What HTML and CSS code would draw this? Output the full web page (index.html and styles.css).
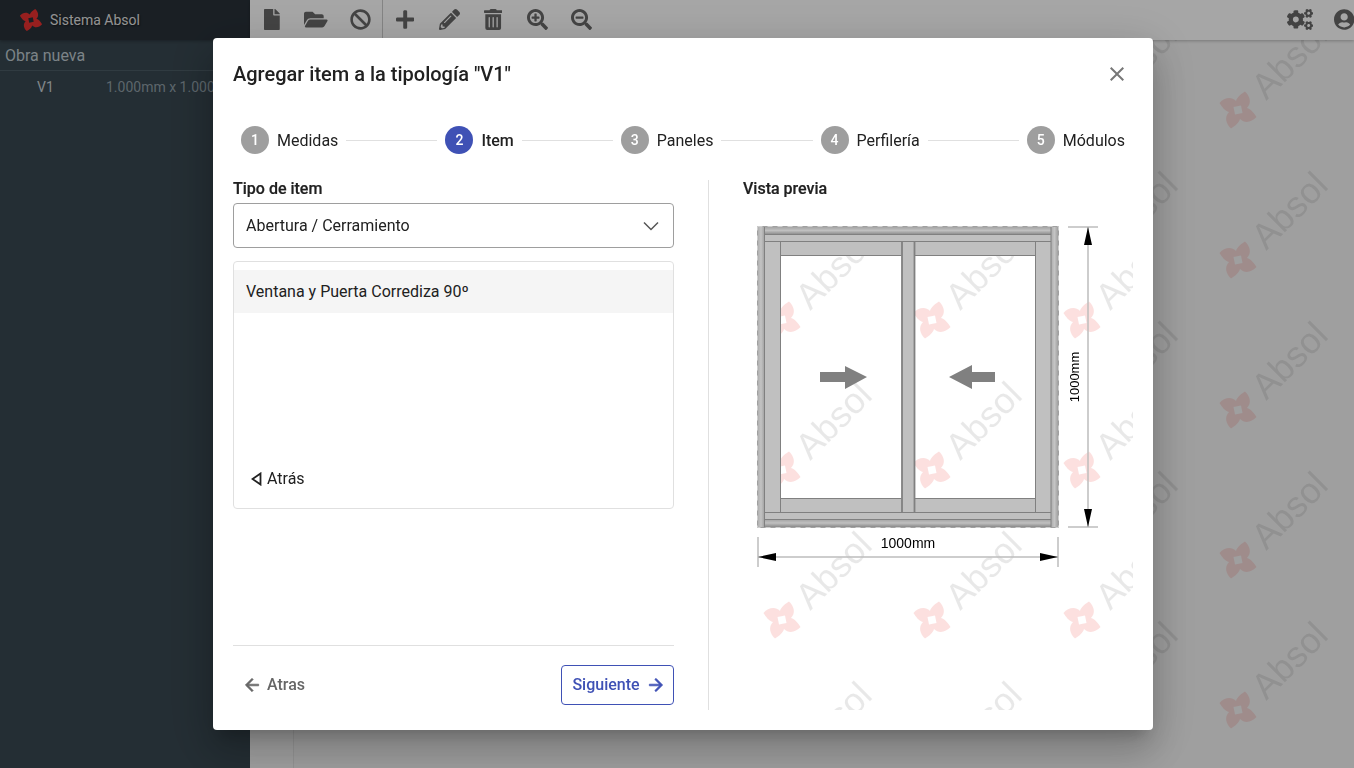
FILE: index.html
```html
<!DOCTYPE html>
<html lang="es">
<head>
<meta charset="utf-8">
<title>Sistema Absol</title>
<link rel="stylesheet" href="styles.css">
</head>
<body>
<svg class="defs" width="0" height="0" aria-hidden="true">
  <defs>
    <path id="pin" fill-rule="evenodd" d="M7-18.500C12-14 14-7 9-2C13-1 16 3 18.500 7C14 12 7 14 2 9C1 13-3 16-7 18.500C-12 14-14 7-9 2C-13 1-16-3-18.500-7C-14-12-7-14-2-9C-1-13 3-16 7-18.500ZM-4.500-3L-3 4.500 4.500 3 3-4.500Z"/>
    <pattern id="wm" width="150" height="150" patternUnits="userSpaceOnUse">
      <use href="#pin" x="39" y="116" class="wm-logo"/>
      <text x="90" y="66" class="wm-text" transform="rotate(-45 90 66)" dy="13" text-anchor="middle">Absol</text>
    </pattern>
    <pattern id="wm-main" href="#wm" x="5" y="-46"/>
    <pattern id="wm-prev" href="#wm" x="0" y="0"/>
    <linearGradient id="band" x1="0" y1="0" x2="0" y2="1">
      <stop offset="0" stop-color="#a0a0a0"/><stop offset=".5" stop-color="#c0c0c0"/><stop offset="1" stop-color="#8a8a8a"/>
    </linearGradient>
    <linearGradient id="bandv" x1="0" y1="0" x2="1" y2="0">
      <stop offset="0" stop-color="#acacac"/><stop offset=".5" stop-color="#c4c4c4"/><stop offset="1" stop-color="#a0a0a0"/>
    </linearGradient>
  </defs>
</svg>

<div class="app">
  <aside class="sidebar">
    <div class="brand">
      <svg class="brand-logo" viewBox="-20 -20 40 40"><use href="#pin"/></svg>
      <span class="brand-name">Sistema Absol</span>
    </div>
    <div class="work-title">Obra nueva</div>
    <div class="work-row"><span class="work-name">V1</span><span class="work-size">1.000mm x 1.000mm</span></div>
  </aside>
  <div class="content">
    <header class="toolbar">
      <div class="tool-group sep">
        <span class="tool"><svg viewBox="0 0 384 512"><path d="M224 136V0H24C10.7 0 0 10.7 0 24v464c0 13.3 10.700 24 24 24h336c13.300 0 24-10.700 24-24V160H248c-13.200 0-24-10.800-24-24zm160-14.100v6.100H256V0h6.100c6.400 0 12.500 2.500 17 7l97.900 98c4.500 4.500 7 10.600 7 16.900z"/></svg></span>
        <span class="tool"><svg viewBox="0 0 576 512"><path d="M572.694 292.093L500.270 416.248A63.997 63.997 0 0 1 444.989 448H45.025c-18.523 0-30.064-20.093-20.731-36.093l72.424-124.155A64 64 0 0 1 152 256h399.964c18.523 0 30.064 20.093 20.730 36.093zM152 224h328v-48c0-26.510-21.490-48-48-48H272l-64-64H48C21.490 64 0 85.490 0 112v278.046l69.077-118.418C86.214 242.250 117.989 224 152 224z"/></svg></span>
        <span class="tool"><svg viewBox="0 0 512 512"><path d="M256 8C119.034 8 8 119.033 8 256s111.034 248 248 248 248-111.034 248-248S392.967 8 256 8zm130.108 117.892c65.448 65.448 70 165.481 20.677 235.637L150.470 105.216c70.204-49.356 170.226-44.735 235.638 20.676zM125.892 386.108c-65.448-65.448-70-165.481-20.677-235.637L361.530 406.784c-70.203 49.356-170.226 44.736-235.638-20.676z"/></svg></span>
      </div>
      <div class="tool-group">
        <span class="tool"><svg viewBox="0 0 448 512"><path d="M416 208H272V64c0-17.670-14.330-32-32-32h-32c-17.670 0-32 14.330-32 32v144H32c-17.670 0-32 14.330-32 32v32c0 17.670 14.330 32 32 32h144v144c0 17.670 14.330 32 32 32h32c17.670 0 32-14.330 32-32V304h144c17.670 0 32-14.330 32-32v-32c0-17.670-14.330-32-32-32z"/></svg></span>
        <span class="tool"><svg viewBox="0 0 512 512"><path d="M497.900 142.100l-46.100 46.100c-4.700 4.700-12.300 4.700-17 0l-111-111c-4.700-4.700-4.700-12.300 0-17l46.100-46.100c18.700-18.700 49.100-18.700 67.900 0l60.100 60.100c18.800 18.700 18.800 49.100 0 67.900zM284.200 99.800L21.600 362.400.4 483.900c-2.900 16.400 11.400 30.600 27.800 27.800l121.500-21.300 262.600-262.600c4.700-4.700 4.700-12.300 0-17l-111-111c-4.800-4.700-12.400-4.700-17.100 0zM124.100 339.900c-5.500-5.500-5.500-14.300 0-19.800l154-154c5.500-5.500 14.300-5.500 19.800 0s5.500 14.300 0 19.800l-154 154c-5.500 5.500-14.300 5.500-19.800 0zM88 424h48v36.300l-64.500 11.300-31.100-31.100L51.700 376H88v48z"/></svg></span>
        <span class="tool"><svg viewBox="0 0 448 512"><path d="M32 464a48 48 0 0 0 48 48h288a48 48 0 0 0 48-48V128H32zm272-256a16 16 0 0 1 32 0v224a16 16 0 0 1-32 0zm-96 0a16 16 0 0 1 32 0v224a16 16 0 0 1-32 0zm-96 0a16 16 0 0 1 32 0v224a16 16 0 0 1-32 0zM432 32H312l-9.400-18.700A24 24 0 0 0 281.100 0H166.800a23.720 23.720 0 0 0-21.400 13.300L136 32H16A16 16 0 0 0 0 48v32a16 16 0 0 0 16 16h416a16 16 0 0 0 16-16V48a16 16 0 0 0-16-16z"/></svg></span>
        <span class="tool"><svg viewBox="0 0 512 512"><path d="M304 192v32c0 6.600-5.400 12-12 12h-56v56c0 6.600-5.400 12-12 12h-32c-6.600 0-12-5.400-12-12v-56h-56c-6.600 0-12-5.400-12-12v-32c0-6.600 5.400-12 12-12h56v-56c0-6.600 5.400-12 12-12h32c6.600 0 12 5.400 12 12v56h56c6.600 0 12 5.400 12 12zm201 284.700L476.700 505c-9.400 9.400-24.600 9.400-33.900 0L343 405.300c-4.500-4.500-7-10.600-7-17V372c-35.300 27.600-79.700 44-128 44C93.100 416 0 322.900 0 208S93.100 0 208 0s208 93.100 208 208c0 48.300-16.400 92.700-44 128h16.300c6.400 0 12.500 2.500 17 7l99.700 99.700c9.300 9.400 9.300 24.600 0 34zM344 208c0-75.200-60.800-136-136-136S72 132.800 72 208s60.800 136 136 136 136-60.800 136-136z"/></svg></span>
        <span class="tool"><svg viewBox="0 0 512 512"><path d="M304 192v32c0 6.600-5.400 12-12 12H124c-6.600 0-12-5.400-12-12v-32c0-6.600 5.400-12 12-12h168c6.600 0 12 5.400 12 12zm201 284.700L476.700 505c-9.400 9.400-24.600 9.400-33.900 0L343 405.300c-4.500-4.500-7-10.600-7-17V372c-35.300 27.600-79.700 44-128 44C93.100 416 0 322.900 0 208S93.100 0 208 0s208 93.100 208 208c0 48.300-16.400 92.700-44 128h16.300c6.400 0 12.500 2.500 17 7l99.700 99.700c9.300 9.400 9.300 24.600 0 34zM344 208c0-75.200-60.800-136-136-136S72 132.800 72 208s60.800 136 136 136 136-60.800 136-136z"/></svg></span>
      </div>
      <div class="tool-group end">
        <span class="tool"><svg viewBox="0 0 640 512"><path d="M512.100 191l-8.200 14.300c-3 5.300-9.400 7.500-15.100 5.400-11.800-4.400-22.600-10.700-32.100-18.600-4.600-3.800-5.800-10.500-2.800-15.700l8.200-14.300c-6.900-8-12.300-17.300-15.900-27.400h-16.500c-6 0-11.200-4.300-12.200-10.300-2-12-2.100-24.600 0-37.100 1-6 6.200-10.400 12.200-10.400h16.500c3.600-10.100 9-19.400 15.900-27.400l-8.200-14.300c-3-5.200-1.900-11.900 2.800-15.700 9.500-7.900 20.400-14.200 32.100-18.600 5.700-2.100 12.100.1 15.100 5.400l8.200 14.300c10.500-1.900 21.200-1.900 31.700 0L552 6.300c3-5.300 9.400-7.500 15.100-5.400 11.800 4.400 22.600 10.700 32.100 18.600 4.600 3.800 5.800 10.500 2.800 15.700l-8.200 14.300c6.900 8 12.300 17.300 15.900 27.400h16.500c6 0 11.200 4.300 12.200 10.300 2 12 2.100 24.600 0 37.100-1 6-6.200 10.400-12.200 10.400h-16.500c-3.600 10.100-9 19.400-15.900 27.400l8.200 14.300c3 5.200 1.900 11.900-2.800 15.700-9.500 7.900-20.400 14.200-32.100 18.600-5.700 2.100-12.100-.1-15.100-5.400l-8.200-14.300c-10.400 1.900-21.200 1.900-31.700 0zm-10.500-58.800c38.500 29.600 82.400-14.300 52.800-52.800-38.500-29.700-82.400 14.300-52.800 52.800zM386.300 286.100l33.700 16.800c10.100 5.800 14.500 18.100 10.500 29.100-8.900 24.200-26.400 46.400-42.600 65.800-7.400 8.900-20.200 11.100-30.300 5.300l-29.100-16.800c-16 13.700-34.600 24.600-54.900 31.700v33.600c0 11.600-8.300 21.600-19.700 23.600-24.600 4.200-50.400 4.400-75.900 0-11.500-2-20-11.900-20-23.600V418c-20.300-7.200-38.900-18-54.900-31.700L74 403c-10 5.800-22.900 3.600-30.300-5.300-16.200-19.400-33.300-41.600-42.200-65.700-4-10.900.4-23.200 10.500-29.100l33.300-16.800c-3.900-20.900-3.900-42.400 0-63.400L12 205.800c-10.100-5.800-14.600-18.100-10.500-29 8.900-24.200 26-46.400 42.200-65.800 7.400-8.900 20.200-11.100 30.300-5.300l29.100 16.800c16-13.700 34.600-24.600 54.900-31.700V57.100c0-11.500 8.200-21.500 19.600-23.500 24.600-4.200 50.500-4.400 76-.1 11.500 2 20 11.900 20 23.600v33.600c20.300 7.200 38.900 18 54.900 31.700l29.100-16.800c10-5.800 22.900-3.600 30.300 5.300 16.200 19.400 33.200 41.600 42.100 65.800 4 10.900.1 23.200-10 29.100l-33.700 16.800c3.900 21 3.900 42.500 0 63.500zm-117.600 21.100c59.200-77-28.700-164.900-105.700-105.700-59.200 77 28.700 164.900 105.700 105.700zm243.400 182.700l-8.200 14.300c-3 5.300-9.400 7.500-15.100 5.400-11.800-4.400-22.600-10.700-32.100-18.600-4.600-3.800-5.800-10.500-2.800-15.700l8.200-14.300c-6.900-8-12.300-17.300-15.900-27.400h-16.500c-6 0-11.200-4.300-12.200-10.300-2-12-2.100-24.600 0-37.100 1-6 6.200-10.400 12.200-10.400h16.500c3.600-10.100 9-19.400 15.900-27.400l-8.200-14.300c-3-5.200-1.900-11.900 2.800-15.700 9.500-7.900 20.400-14.200 32.100-18.600 5.700-2.100 12.100.1 15.100 5.400l8.200 14.300c10.500-1.900 21.200-1.900 31.700 0l8.200-14.300c3-5.300 9.400-7.500 15.100-5.400 11.800 4.400 22.600 10.700 32.100 18.600 4.600 3.800 5.800 10.500 2.800 15.700l-8.200 14.300c6.900 8 12.300 17.300 15.900 27.400h16.500c6 0 11.200 4.300 12.200 10.300 2 12 2.100 24.600 0 37.100-1 6-6.200 10.400-12.200 10.400h-16.500c-3.600 10.100-9 19.400-15.900 27.400l8.200 14.300c3 5.200 1.900 11.900-2.800 15.700-9.500 7.900-20.400 14.200-32.100 18.600-5.700 2.100-12.100-.1-15.100-5.400l-8.200-14.300c-10.400 1.900-21.200 1.900-31.700 0zM501.600 431c38.500 29.600 82.400-14.300 52.800-52.800-38.500-29.600-82.400 14.300-52.800 52.800z"/></svg></span>
        <span class="tool"><svg viewBox="0 0 496 512"><path d="M248 8C111 8 0 119 0 256s111 248 248 248 248-111 248-248S385 8 248 8zm0 96c48.600 0 88 39.400 88 88s-39.400 88-88 88-88-39.400-88-88 39.400-88 88-88zm0 344c-58.700 0-111.300-26.600-146.500-68.200 18.800-35.400 55.600-59.800 98.500-59.800 2.400 0 4.800.4 7.100 1.100 13 4.200 26.600 6.900 40.900 6.900 14.300 0 28-2.700 40.900-6.900 2.300-.7 4.700-1.100 7.100-1.100 42.900 0 79.700 24.400 98.500 59.800C359.300 421.400 306.700 448 248 448z"/></svg></span>
      </div>
    </header>
    <div class="workspace">
      <div class="strip"></div>
      <main class="canvas">
        <svg class="wm-fill" width="100%" height="100%"><rect width="100%" height="100%" fill="url(#wm-main)"/></svg>
      </main>
    </div>
  </div>
</div>

<div class="backdrop"></div>

<section class="modal">
  <div class="modal-head">
    <h2 class="modal-title">Agregar item a la tipología "V1"</h2>
    <svg class="close" viewBox="0 0 24 24"><path d="M19 6.410L17.590 5 12 10.590 6.410 5 5 6.410 10.590 12 5 17.590 6.410 19 12 13.410 17.590 19 19 17.590 13.410 12z"/></svg>
  </div>
  <ol class="stepper">
    <li class="step"><span class="dot">1</span><span class="step-label">Medidas</span></li>
    <li class="line"></li>
    <li class="step active"><span class="dot">2</span><span class="step-label">Item</span></li>
    <li class="line"></li>
    <li class="step"><span class="dot">3</span><span class="step-label">Paneles</span></li>
    <li class="line"></li>
    <li class="step"><span class="dot">4</span><span class="step-label">Perfilería</span></li>
    <li class="line"></li>
    <li class="step"><span class="dot">5</span><span class="step-label">Módulos</span></li>
  </ol>
  <div class="modal-body">
    <div class="col-left">
      <div class="field-label">Tipo de item</div>
      <div class="select">
        <span>Abertura / Cerramiento</span>
        <svg class="chev" viewBox="0 0 16 10"><path d="M1 1.500l7 7 7-7"/></svg>
      </div>
      <div class="list">
        <div class="list-item">Ventana y Puerta Corrediza 90º</div>
        <div class="list-back">
          <svg class="tri" viewBox="0 0 11 14"><path d="M9.500 1.500L1.500 7l8 5.500z"/></svg>
          <span>Atrás</span>
        </div>
      </div>
      <div class="footer">
        <div class="btn-back">
          <svg viewBox="0 0 24 24"><path d="M20 11H7.830l5.590-5.590L12 4l-8 8 8 8 1.410-1.410L7.830 13H20v-2z"/></svg>
          <span>Atras</span>
        </div>
        <div class="btn-next">
          <span>Siguiente</span>
          <svg viewBox="0 0 24 24"><path d="M12 4l-1.410 1.410L16.170 11H4v2h12.170l-5.580 5.590L12 20l8-8z"/></svg>
        </div>
      </div>
    </div>
    <div class="col-right">
      <div class="field-label">Vista previa</div>
      <div class="preview">
        <svg class="wm-fill" width="100%" height="100%"><rect width="100%" height="100%" fill="url(#wm-prev)"/></svg>
        <svg class="drawing" width="390" height="506" viewBox="743 204 390 506">
          <g class="frame">
            <rect x="765" y="241.500" width="16" height="271" class="fill"/>
            <rect x="781" y="241.500" width="121" height="14.500" class="fill"/>
            <rect x="781" y="498" width="121" height="14.500" class="fill"/>
            <rect x="902" y="241.500" width="13" height="271" class="fill"/>
            <rect x="915" y="241.500" width="120" height="14.500" class="fill"/>
            <rect x="915" y="498" width="120" height="14.500" class="fill"/>
            <rect x="1035" y="241.500" width="16" height="271" class="fill"/>
            <path class="ln" d="M780.500 241.500V512.500M781 255.500H901.500M781 498.500H901.500M1035.500 241.500V512.500M915 255.500H1035M915 498.500H1035"/>
            <path class="ln-thick" d="M902 241.500V512.500M914.500 241.500V512.500"/>
            <rect x="758" y="234.500" width="300" height="7" class="fill"/>
            <rect x="758" y="512" width="300" height="7" class="fill"/>
            <rect x="765" y="226.500" width="286" height="8" fill="url(#band)"/>
            <rect x="765" y="519" width="286" height="8" fill="url(#band)"/>
            <rect x="757.500" y="226.500" width="7" height="301" fill="url(#bandv)"/>
            <rect x="1051" y="226.500" width="7" height="301" fill="url(#bandv)"/>
            <path class="ln" d="M764.500 226.500V527M1051 226.500V527M765 234.500H1051M765 241.500H1051M765 512.500H1051M765 519.500H1051"/>
            <path class="edge" d="M757.500 226.500H1058.500V527.500H757.500Z"/>
            <path class="dash" d="M757.500 226.500H1058.500V527.500H757.500Z"/>
          </g>
          <path class="slide" d="M820 372H845V366L867 377 845 389V382H820Z"/>
          <path class="slide" d="M995 372H972V365L949 377 972 389V382H995Z"/>
          <g class="dim">
            <path d="M1068 227H1098M1068 527H1098M1088 227V527M758 537V567M1058 537V567M758 557H1058"/>
          </g>
          <path class="head" d="M1088 227L1092 245H1084ZM1088 527L1092 509H1084ZM758 557L776 553V561ZM1058 557L1040 553V561Z"/>
          <text class="dim-text" x="908" y="548" text-anchor="middle">1000mm</text>
          <text class="dim-text dim-v" x="1079" y="377" text-anchor="middle" transform="rotate(-90 1079 377)">1000mm</text>
        </svg>
      </div>
    </div>
  </div>
</section>
</body>
</html>
```
FILE: styles.css
```css
* { box-sizing: border-box; }
html, body { margin: 0; height: 100%; overflow: hidden; }
body { font-family: Roboto, "Liberation Sans", sans-serif; font-size: 16px; color: #212121; background: #f2f2f2; }
.defs { position: absolute; }

.app { display: flex; width: 1354px; height: 768px; }
.sidebar { width: 250px; flex: none; background: #37464f; overflow: hidden; color: #c4cdd2; }
.brand { height: 40px; background: #283038; display: flex; align-items: center; padding-left: 19px; box-shadow: 0 1px 3px rgba(0,0,0,.3); }
.brand-logo { width: 24px; height: 24px; fill: #e53030; flex: none; }
.brand-name { margin-left: 7px; font-size: 14px; color: #e0e0e0; text-shadow: 1px 1px 2px rgba(0,0,0,.6); }
.work-title { height: 31px; line-height: 31px; padding-left: 5px; font-size: 16px; color: #bcc7cd; border-bottom: 1px solid #4a5a63; }
.work-row { display: flex; height: 32px; align-items: center; font-size: 14px; white-space: nowrap; }
.work-name { margin-left: 37px; width: 69px; flex: none; color: #c4cdd2; }
.work-size { color: #8d9ba3; }

.content { flex: 1; display: flex; flex-direction: column; min-width: 0; }
.toolbar { height: 40px; flex: none; display: flex; background: #fcfcfc; box-shadow: 0 1px 3px rgba(0,0,0,.25); position: relative; z-index: 1; overflow: hidden; }
.tool-group { display: flex; }
.tool-group.sep { border-right: 1px solid #c8c8c8; }
.tool-group.end { margin-left: auto; margin-right: -12px; }
.tool { width: 44px; height: 38px; display: flex; align-items: center; justify-content: center; }
.tool svg { height: 21px; fill: #676767; display: block; }
.workspace { flex: 1; display: flex; min-height: 0; }
.strip { width: 44px; flex: none; background: #f4f4f4; border-right: 1px solid #e2e2e2; }
.canvas { flex: 1; position: relative; background: #f2f2f2; overflow: hidden; }

.wm-fill { position: absolute; inset: 0; display: block; }
.wm-logo { fill: #ef5350; fill-opacity: .18; }
.wm-text { font-family: "Liberation Sans", Arial, sans-serif; font-size: 36px; fill: #000; fill-opacity: .09; }

.backdrop { position: fixed; inset: 0; z-index: 5; background: rgba(0,0,0,.34); }

.modal { position: fixed; z-index: 6; left: 213px; top: 38px; width: 940px; height: 692px; background: #fff; border-radius: 4px; padding: 24px 20px 20px;
  display: flex; flex-direction: column;
  box-shadow: 0 11px 15px -7px rgba(0,0,0,.2), 0 24px 38px 3px rgba(0,0,0,.14), 0 9px 46px 8px rgba(0,0,0,.12); }
.modal-head { height: 24px; display: flex; align-items: center; justify-content: space-between; }
.modal-title { margin: 0; font-size: 20px; font-weight: 500; line-height: 24px; color: #212121; }
.close { width: 24px; height: 24px; fill: #777; margin-right: 4px; }

.stepper { list-style: none; margin: 40px 0 0; padding: 0 8px; height: 28px; display: flex; align-items: center; }
.step { display: flex; align-items: center; gap: 8px; flex: none; }
.dot { width: 28px; height: 28px; border-radius: 50%; background: #9e9e9e; color: #fff; font-size: 14px; font-weight: 500; display: flex; align-items: center; justify-content: center; }
.step-label { color: #212121; }
.step.active .dot { background: #3f51b5; }
.step.active .step-label { font-weight: 500; }
.line { flex: 1; height: 1px; background: #e0e0e0; margin: 0 8px; }

.modal-body { margin-top: 26px; height: 530px; display: flex; }
.col-left { width: 441px; flex: none; display: flex; flex-direction: column; }
.col-right { flex: 1; margin-left: 34px; padding-left: 34px; border-left: 1px solid #e0e0e0; min-width: 0; }
.field-label { font-size: 16px; font-weight: 500; line-height: 18px; color: #212121; -webkit-text-stroke: .2px #212121; }
.select { margin-top: 5px; height: 45px; border: 1px solid #9e9e9e; border-radius: 4px; padding: 0 14px 0 12px; display: flex; align-items: center; justify-content: space-between; }
.chev { width: 16px; height: 10px; fill: none; stroke: #555; stroke-width: 1.5; }
.list { margin-top: 13px; height: 248px; border: 1px solid #e0e0e0; border-radius: 4px; padding-top: 8px; display: flex; flex-direction: column; }
.list-item { height: 43px; line-height: 43px; padding-left: 12px; background: #f5f5f5; }
.list-back { margin-top: auto; height: 39px; display: flex; align-items: flex-start; padding: 0 0 0 17px; gap: 5px; line-height: 20px; }
.tri { width: 11px; height: 14px; margin-top: 3px; fill: none; stroke: #212121; stroke-width: 1.8; }
.footer { margin-top: auto; border-top: 1px solid #e0e0e0; padding-top: 19px; height: 65px; display: flex; justify-content: space-between; }
.btn-back { display: flex; align-items: center; height: 40px; padding: 0 0 2px 9px; gap: 5px; color: #666; font-weight: 500; }
.btn-back svg { width: 20px; height: 20px; fill: #666; stroke: #666; stroke-width: .8; margin-top: 2px; }
.btn-next { width: 113px; height: 40px; border: 1px solid #3f51b5; border-radius: 4px; padding: 0 0 2px 3px; display: flex; align-items: center; justify-content: center; gap: 6px; color: #3f51b5; font-weight: 500; }
.btn-next svg { width: 20px; height: 20px; fill: #3f51b5; stroke: #3f51b5; stroke-width: .8; margin-top: 2px; }

.preview { margin-top: 6px; height: 506px; position: relative; overflow: hidden; }
.drawing { position: relative; display: block; }
.fill { fill: #c0c0c0; }
.ln { fill: none; stroke: #808080; stroke-width: 1; }
.ln-thick { fill: none; stroke: #808080; stroke-width: 1.8; }
.edge { fill: none; stroke: #a0a0a0; stroke-width: 1; }
.dash { fill: none; stroke: #cfcfcf; stroke-width: 1; stroke-dasharray: 5 5; }
.slide { fill: #808080; }
.dim path { fill: none; stroke: #bdbdbd; stroke-width: 1.5; }
.head { fill: #000; }
.dim-text { font-family: "Liberation Sans", Arial, sans-serif; font-size: 14px; fill: #000; }
.dim-v { font-size: 13px; }
```
